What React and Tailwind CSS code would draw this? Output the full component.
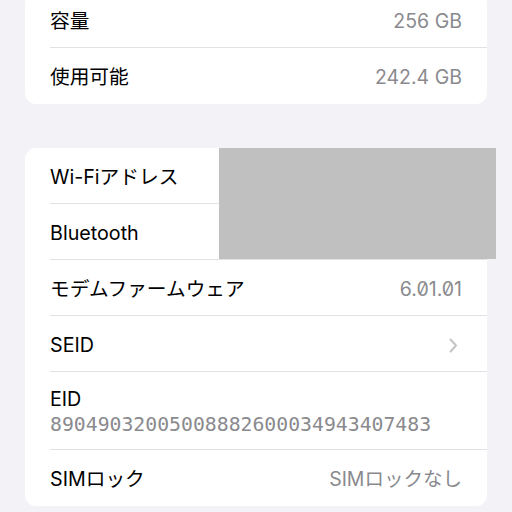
import React from 'react';

const font = { fontFamily: 'Inter, "Noto Sans CJK JP", sans-serif' };

const Row = ({ label, value, chevron, last }) => (
    <div className="flex items-center h-[56px] pt-[3px] pr-[25px] relative">
        <span className="text-[19.7px] text-black">{label}</span>
        <span className="ml-auto text-[19.5px] text-[#8a8a8e] slashed-zero">{value}</span>
        {chevron && (
            <svg width="9" height="15" viewBox="0 0 9 15" className="ml-auto mr-[4px]">
                <path d="M1.5 1.5 L7 7.5 L1.5 13.5" fill="none" stroke="#c4c4c7" strokeWidth="2" strokeLinecap="round" strokeLinejoin="round" />
            </svg>
        )}
        {!last && <div className="absolute left-0 right-0 bottom-0 h-px bg-[#e2e2e6]" />}
    </div>
);

const App = () => {
    return (
        <div className="w-[512px] h-[512px] bg-[#f2f2f7] overflow-hidden" style={font}>
            <div className="mx-[25px] -mt-[8px] bg-white rounded-[11px] pl-[25px]">
                <Row label="容量" value="256 GB" />
                <Row label="使用可能" value="242.4 GB" last />
            </div>

            <div className="mx-[25px] mt-[44px] bg-white rounded-[11px] pl-[25px] relative">
                <Row label="Wi-Fiアドレス" value="" />
                <Row label="Bluetooth" value="" />
                <div className="absolute left-[194px] top-0 w-[277px] h-[111px] bg-[#c0c0c0]" />
                <Row label="モデムファームウェア" value="6.01.01" />
                <Row label="SEID" chevron />
                <div className="h-[78px] flex flex-col justify-center pt-[1px] relative">
                    <span className="text-[19.7px] text-black leading-[26px]">EID</span>
                    <span className="text-[19.8px] text-[#8a8a8e] leading-[26px] slashed-zero" style={{ fontFamily: '"DejaVu Sans Mono", monospace' }}>
                        89049032005008882600034943407483
                    </span>
                    <div className="absolute left-0 right-0 bottom-0 h-px bg-[#e2e2e6]" />
                </div>
                <Row label="SIMロック" value="SIMロックなし" last />
            </div>
        </div>
    );
};

export default App;
